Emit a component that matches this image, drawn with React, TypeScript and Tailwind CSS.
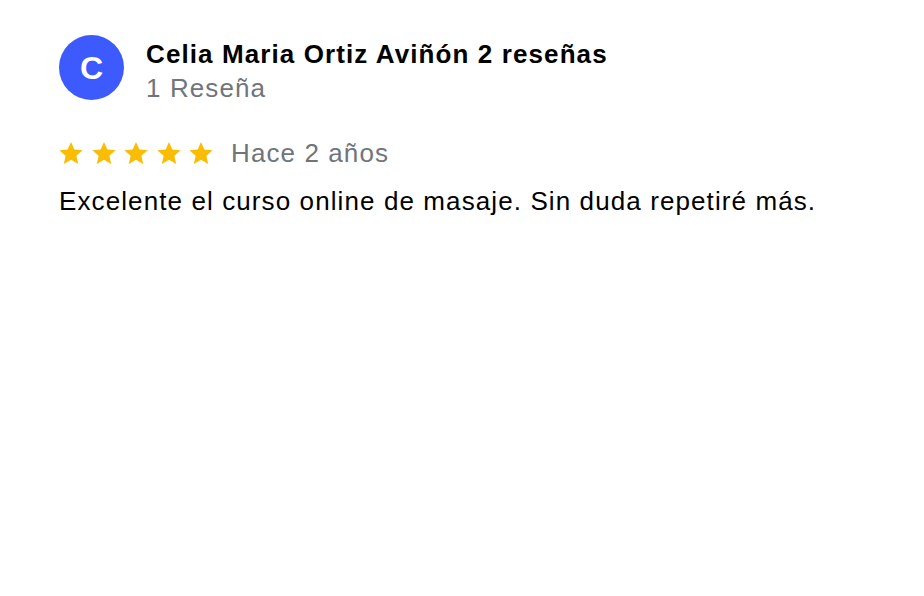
import React from "react";

const Star = () => (
  <svg width="28" height="28" viewBox="0 0 24 24" className="shrink-0">
    <path
      fill="#fbbc04"
      d="M12 2.5l2.9 6.6 7.1.6-5.4 4.7 1.6 7-6.2-3.7-6.2 3.7 1.6-7L2 9.7l7.1-.6z"
    />
  </svg>
);

export default function App() {
  return (
    <div
      className="w-[924px] h-[596px] bg-white pl-[59px] pt-[35px] tracking-[1.1px]"
      style={{ fontFamily: '"Liberation Sans", Arial, sans-serif' }}
    >
      <div className="flex items-start gap-[22px]">
        <div className="w-[65px] h-[65px] rounded-full bg-[#3d5afe] flex items-center justify-center text-white font-bold text-[32px] leading-none tracking-normal">
          C
        </div>
        <div className="flex flex-col pt-[3px]">
          <div className="text-[26px] font-bold text-black leading-[32px]">
            Celia Maria Ortiz Aviñón 2 reseñas
          </div>
          <div className="text-[26px] text-[#70757a] leading-[32px] mt-[2px]">1 Reseña</div>
        </div>
      </div>
      <div className="flex items-center mt-[31px] h-[36px]">
        <div className="flex items-center gap-[4.5px] -ml-[2px]">
          <Star />
          <Star />
          <Star />
          <Star />
          <Star />
        </div>
        <span className="ml-[16px] text-[26px] text-[#70757a] leading-[32px]">Hace 2 años</span>
      </div>
      <div className="mt-[14px] text-[26px] text-black leading-[32px]">
        Excelente el curso online de masaje. Sin duda repetiré más.
      </div>
    </div>
  );
}
